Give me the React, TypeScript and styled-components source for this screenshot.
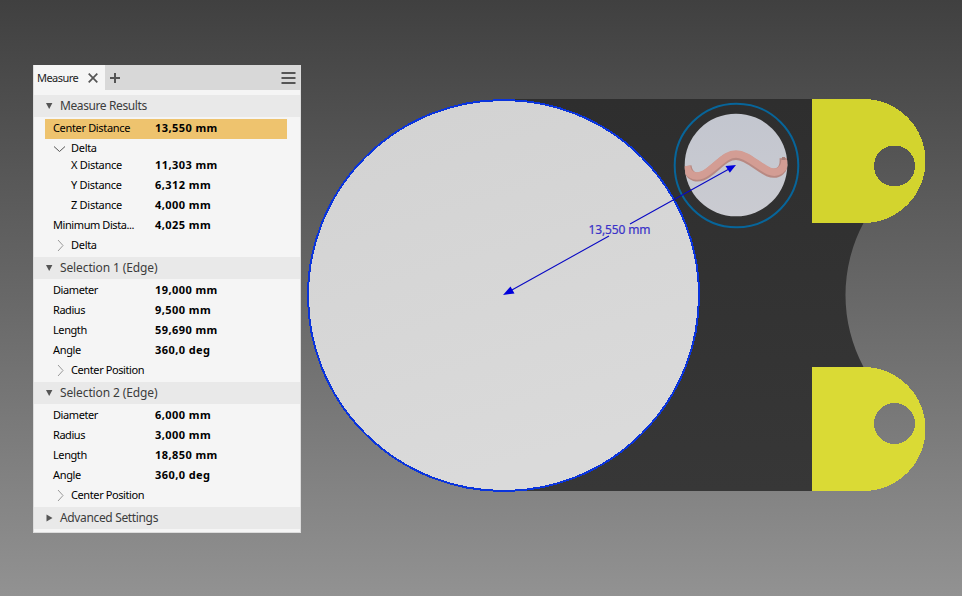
import React from "react";
import styled, { createGlobalStyle } from "styled-components";

const GlobalStyle = createGlobalStyle`
  html, body { margin: 0; padding: 0; }
  body { overflow: hidden; }
  * { box-sizing: border-box; }
`;

const Viewport = styled.main`
  position: relative;
  width: 962px;
  height: 596px;
  padding: 65px 0 0 33px;
  overflow: hidden;
  background: linear-gradient(180deg, #404040 0%, #686868 50%, #929292 100%);
  font-family: "Noto Sans", "Open Sans", sans-serif;
`;

const Scene = styled.svg`
  position: absolute;
  inset: 0;
`;

const Panel = styled.section`
  position: relative;
  display: flex;
  flex-direction: column;
  width: 268px;
  height: 468px;
  background: #f5f5f5;
  border: 1px solid #dcdcdc;
  border-top: 0;
  color: #000;
`;

const TabStrip = styled.div`
  display: flex;
  align-items: center;
  flex: none;
  height: 25px;
  margin-bottom: 5px;
  background: #d8d8d8;
`;

const Tab = styled.div`
  display: flex;
  align-items: center;
  justify-content: space-between;
  width: 71px;
  height: 26px;
  padding: 0 7px 0 3px;
  background: #f5f5f5;
  color: #222;
`;

const PlusIcon = styled.svg`
  margin-left: 5px;
`;

const MenuIcon = styled.svg`
  margin-left: auto;
  margin-right: 4px;
`;

const SectionHeader = styled.header`
  display: flex;
  align-items: center;
  gap: 7px;
  flex: none;
  height: 22px;
  padding-left: 11px;
  background: #e9e9e9;
  color: #3c3c3c;
`;

const Rows = styled.div<{ $top?: number; $bottom?: number }>`
  display: flex;
  flex-direction: column;
  padding: ${({ $top = 2 }) => $top}px 13px ${({ $bottom = 1 }) => $bottom}px 11px;
`;

const Row = styled.div<{ $active?: boolean; $indent?: boolean }>`
  display: grid;
  grid-template-columns: ${({ $indent }) => ($indent ? "84px" : "102px")} 1fr;
  align-items: center;
  height: 20px;
  padding-left: ${({ $indent }) => ($indent ? 26 : 8)}px;
  padding-bottom: ${({ $active }) => ($active ? 2 : 0)}px;
  background: ${({ $active }) => ($active ? "#eec36e" : "transparent")};
`;

const TreeRow = styled.div<{ $open?: boolean }>`
  display: flex;
  align-items: center;
  gap: 5px;
  height: ${({ $open }) => ($open ? 16 : 20)}px;
  padding-left: 8px;
  padding-top: ${({ $open }) => ($open ? 2 : 0)}px;
`;

const TextBox = styled.span<{ $bold?: boolean; $size?: number; $track: number }>`
  display: block;
  font-size: ${({ $size = 11 }) => $size}px;
  font-weight: ${({ $bold }) => ($bold ? 700 : 400)};
  line-height: 16px;
  letter-spacing: ${({ $track }) => $track}px;
  white-space: nowrap;
`;

const tracking: Record<string, number> = {
  "Center Distance": -0.34,
  "X Distance": -0.3,
  "Y Distance": -0.3,
  "Z Distance": -0.28,
  "Minimum Dista...": -0.42,
  "Center Position": -0.4,
  Diameter: -0.42,
  Radius: -0.45,
  Length: -0.42,
  Angle: -0.35,
  Measure: -0.55,
  "Measure Results": -0.4,
  "Advanced Settings": -0.35,
};

const Label = ({ children }: { children: string }) => <TextBox $track={tracking[children] ?? -0.3}>{children}</TextBox>;
const Value = ({ children }: { children: string }) => <TextBox $bold $track={0.43}>{children}</TextBox>;

const Measure = ({ name, value, active, indent }: { name: string; value: string; active?: boolean; indent?: boolean }) => (
  <Row $active={active} $indent={indent}>
    <Label>{name}</Label>
    <Value>{value}</Value>
  </Row>
);

const Branch = ({ name, open }: { name: string; open?: boolean }) => (
  <TreeRow $open={open}>
    <svg width="13" height="13" viewBox="0 0 13 13" fill="none" stroke={open ? "#555" : "#999"}>
      <path d={open ? "M1 4.500l5.500 5L12 4.500" : "M5 1l5 5.500L5 12"} />
    </svg>
    <Label>{name}</Label>
  </TreeRow>
);

const Header = ({ name, open = true }: { name: string; open?: boolean }) => (
  <SectionHeader>
    <svg width="8" height="8" viewBox="0 0 8 8" fill="#555">
      <path d={open ? "M1 1h6.400L4.200 7z" : "M1.500 0.500L7.500 4L1.500 7.500z"} />
    </svg>
    <TextBox $size={12} $track={tracking[name] ?? -0.12}>{name}</TextBox>
  </SectionHeader>
);

const selections = [
  { name: "Selection 1 (Edge)", values: ["19,000 mm", "9,500 mm", "59,690 mm", "360,0 deg"] },
  { name: "Selection 2 (Edge)", values: ["6,000 mm", "3,000 mm", "18,850 mm", "360,0 deg"] },
];
const properties = ["Diameter", "Radius", "Length", "Angle"];

const Model = () => (
  <Scene width="962" height="596" viewBox="0 0 962 596">
    <defs>
      <linearGradient id="plate" x1="0" y1="0" x2="0" y2="1">
        <stop offset="0" stopColor="#2e2e2e" />
        <stop offset="1" stopColor="#373737" />
      </linearGradient>
      <linearGradient id="disc" x1="0" y1="0" x2="0.3" y2="1">
        <stop offset="0" stopColor="#d2d2d2" />
        <stop offset="1" stopColor="#dadada" />
      </linearGradient>
      <linearGradient id="glass" x1="0" y1="0" x2="0" y2="1">
        <stop offset="0" stopColor="#c3c6cf" />
        <stop offset="1" stopColor="#cacbd1" />
      </linearGradient>
      <clipPath id="port"><circle cx="736" cy="165" r="51.300" /></clipPath>
    </defs>
    <path d="M503 99H863.500V223A153 153 0 0 0 863.500 367V491H503z" fill="url(#plate)" />
    <g shapeRendering="crispEdges" fillRule="evenodd">
      <path d="M812 99H863.500a62 62 0 0 1 0 124H812zM874 166a20.500 20.500 0 1 0 41 0a20.500 20.500 0 1 0-41 0z" fill="#d3d42e" />
      <path d="M812 367H863.500a62 62 0 0 1 0 124H812zM874 423.500a20.500 20.500 0 1 0 41 0a20.500 20.500 0 1 0-41 0z" fill="#dada35" />
    </g>
    <circle cx="503.500" cy="295.500" r="195.500" fill="url(#disc)" stroke="#0a34dc" strokeWidth="2" shapeRendering="crispEdges" />
    <circle cx="736.500" cy="165.500" r="61.800" fill="none" stroke="#07659a" strokeWidth="2" />
    <circle cx="736" cy="165" r="51.300" fill="url(#glass)" />
    <g clipPath="url(#port)" fill="none" strokeLinejoin="round">
      <path d="M687 166C689 178 698 180 708 173C720 164 726 155.500 736 155.500C747 155.500 756 166 768 172C778 176 785 170 784 158" stroke="#b88982" strokeWidth="9" />
      <path d="M686.500 166C688 177 698 179 708 171.500C720 163 726 154 736 154C747 154 757 165.500 769 171C778 174.500 785 169 785 160" stroke="#d39d94" strokeWidth="7.500" />
      <path d="M782 158.500h3" stroke="#a97f79" strokeWidth="3" />
    </g>
    <g fill="#0000dc">
      <path d="M511 290.500L609 236M630 224L729 169" fill="none" stroke="#0909c4" strokeWidth="1.100" />
      <path d="M503 295L510.500 286.500L514.500 293.500zM736 165L725.500 166L729.800 172.800z" />
    </g>
    <text x="588.500" y="233.500" fontSize="12" textLength="62" fill="#3a32c8" stroke="#3a32c8" strokeWidth="0.200">13,550 mm</text>
  </Scene>
);

export default function App() {
  return (
    <>
      <GlobalStyle />
      <Viewport>
        <Model />
        <Panel>
          <TabStrip>
            <Tab>
              <Label>Measure</Label>
              <svg width="10" height="10" viewBox="0 0 10 10" stroke="#555" strokeWidth="1.700"><path d="M.7.7l8.600 8.600M9.300.7L.7 9.300" /></svg>
            </Tab>
            <PlusIcon width="10" height="10" viewBox="0 0 10 10" stroke="#555" strokeWidth="2"><path d="M5 0v10M0 5h10" /></PlusIcon>
            <MenuIcon width="15" height="12" viewBox="0 0 15 12" stroke="#555" strokeWidth="2"><path d="M0.500 1h14M0.500 6h14M0.500 11h14" /></MenuIcon>
          </TabStrip>
          <Header name="Measure Results" />
          <Rows $bottom={2}>
            <Measure name="Center Distance" value="13,550 mm" active />
            <Branch name="Delta" open />
            <Measure name="X Distance" value="11,303 mm" indent />
            <Measure name="Y Distance" value="6,312 mm" indent />
            <Measure name="Z Distance" value="4,000 mm" indent />
            <Measure name="Minimum Dista..." value="4,025 mm" />
            <Branch name="Delta" />
          </Rows>
          {selections.map((selection) => (
            <React.Fragment key={selection.name}>
              <Header name={selection.name} />
              <Rows $top={1} $bottom={2}>
                {properties.map((property, i) => (
                  <Measure key={property} name={property} value={selection.values[i]} />
                ))}
                <Branch name="Center Position" />
              </Rows>
            </React.Fragment>
          ))}
          <Header name="Advanced Settings" open={false} />
        </Panel>
      </Viewport>
    </>
  );
}
